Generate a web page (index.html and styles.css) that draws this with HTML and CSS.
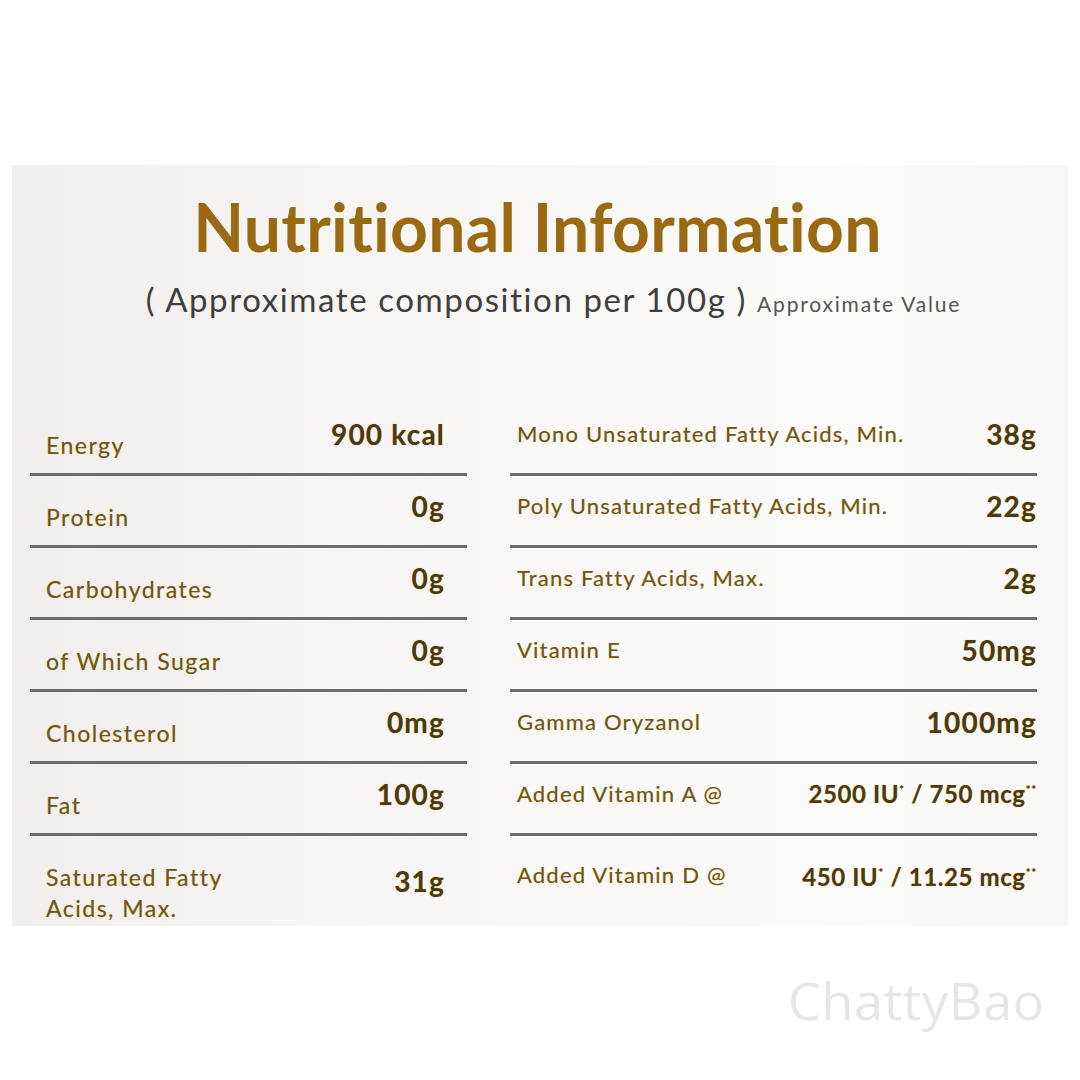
FILE: index.html
```html
<!DOCTYPE html>
<html lang="en">
<head>
<meta charset="utf-8">
<title>Nutritional Information</title>
<link rel="stylesheet" href="styles.css">
</head>
<body>
<div class="page">
  <section class="panel">
    <header class="head">
      <h1 class="title">Nutritional Information</h1>
      <p class="sub"><span class="sub-main">( Approximate composition per 100g )</span> <span class="sub-small">Approximate Value</span></p>
    </header>
    <div class="table">
      <div class="col col-left">
        <div class="row"><span class="label">Energy</span><span class="val">900 kcal</span></div>
        <div class="row"><span class="label">Protein</span><span class="val">0g</span></div>
        <div class="row"><span class="label">Carbohydrates</span><span class="val">0g</span></div>
        <div class="row"><span class="label">of Which Sugar</span><span class="val">0g</span></div>
        <div class="row"><span class="label">Cholesterol</span><span class="val">0mg</span></div>
        <div class="row"><span class="label">Fat</span><span class="val">100g</span></div>
        <div class="row last"><span class="label">Saturated Fatty<br>Acids, Max.</span><span class="val">31g</span></div>
      </div>
      <div class="col col-right">
        <div class="row"><span class="label">Mono Unsaturated Fatty Acids, Min.</span><span class="val">38g</span></div>
        <div class="row"><span class="label">Poly Unsaturated Fatty Acids, Min.</span><span class="val">22g</span></div>
        <div class="row"><span class="label">Trans Fatty Acids, Max.</span><span class="val">2g</span></div>
        <div class="row"><span class="label">Vitamin E</span><span class="val">50mg</span></div>
        <div class="row"><span class="label">Gamma Oryzanol</span><span class="val">1000mg</span></div>
        <div class="row"><span class="label">Added Vitamin A @</span><span class="val small">2500 IU<sup>*</sup> / 750 mcg<sup>**</sup></span></div>
        <div class="row last"><span class="label">Added Vitamin D @</span><span class="val small">450 IU<sup>*</sup> / 11.25 mcg<sup>**</sup></span></div>
      </div>
    </div>
  </section>
  <div class="watermark">ChattyBao</div>
</div>
</body>
</html>
```

FILE: styles.css
```css
* { box-sizing: border-box; }
html, body { margin: 0; padding: 0; background: #ffffff; }
body { width: 1080px; height: 1080px; overflow: hidden; font-family: Lato, "Noto Sans", sans-serif; }

.page { padding-top: 165px; padding-left: 12px; }

.panel {
  width: 1056px;
  height: 761px;
  background: linear-gradient(90deg, #f0efed 0%, #f6f5f3 30%, #f9f8f7 55%, #fbfbfa 80%, #f7f7f6 100%);
  padding: 22px 31px 0 18px;
  display: flex;
  flex-direction: column;
}

.head { display: flex; flex-direction: column; align-items: center; }
.title {
  margin: 0;
  font-family: Lato, sans-serif;
  font-weight: 700;
  font-size: 66px;
  line-height: 80px;
  color: #9a6a12;
  letter-spacing: 0.3px;
  padding-left: 8px;
}
.sub {
  margin: 12px 0 0;
  padding-left: 40px;
  color: #3e3e3e;
  white-space: nowrap;
  line-height: 40px;
}
.sub-main { font-size: 33px; letter-spacing: 1.6px; }
.sub-small { font-size: 21px; color: #555; letter-spacing: 1.8px; margin-left: 6px; }

.table {
  margin-top: 78px;
  display: grid;
  grid-template-columns: 437px 527px;
  column-gap: 43px;
}
.col { display: flex; flex-direction: column; }

.row {
  height: 72px;
  border-bottom: 3px solid #6e6c68;
  display: flex;
  justify-content: space-between;
  align-items: center;
}
.row.last { border-bottom: none; height: 92px; align-items: flex-start; }

.label {
  color: #6b5625;
  text-shadow: 0 0 1px #e3b447;
}
.col-left .label { font-size: 23px; letter-spacing: 1.5px; }
.col-right .label { font-size: 22px; letter-spacing: 1.2px; }
.val {
  color: #4a3a16;
  font-weight: 700;
  font-size: 28px;
  letter-spacing: 1.2px;
  text-shadow: 0 0 1px #d9a43a;
  padding-bottom: 10px;
}
.val.small { font-size: 24px; letter-spacing: 0.6px; }
.val sup { font-size: 12px; vertical-align: 9px; line-height: 0; }

.col-left .label { padding-left: 16px; padding-top: 12px; }
.col-left .val { padding-right: 22px; }
.col-right .label { padding-left: 7px; padding-bottom: 10px; }
.col-right .val { padding-right: 0; }

.col-left .row.last .label { padding-top: 26px; line-height: 31px; }
.col-left .row.last .val { padding-top: 28px; padding-bottom: 0; }
.col-right .row.last .label { padding-top: 25px; padding-bottom: 0; }
.col-right .row.last .val { padding-top: 26px; padding-bottom: 0; }

.watermark {
  margin-top: 39px;
  margin-left: 776px;
  font-family: "Open Sans", sans-serif;
  font-size: 52px;
  line-height: 70px;
  color: #e6e6e6;
  letter-spacing: 0.7px;
}
```
